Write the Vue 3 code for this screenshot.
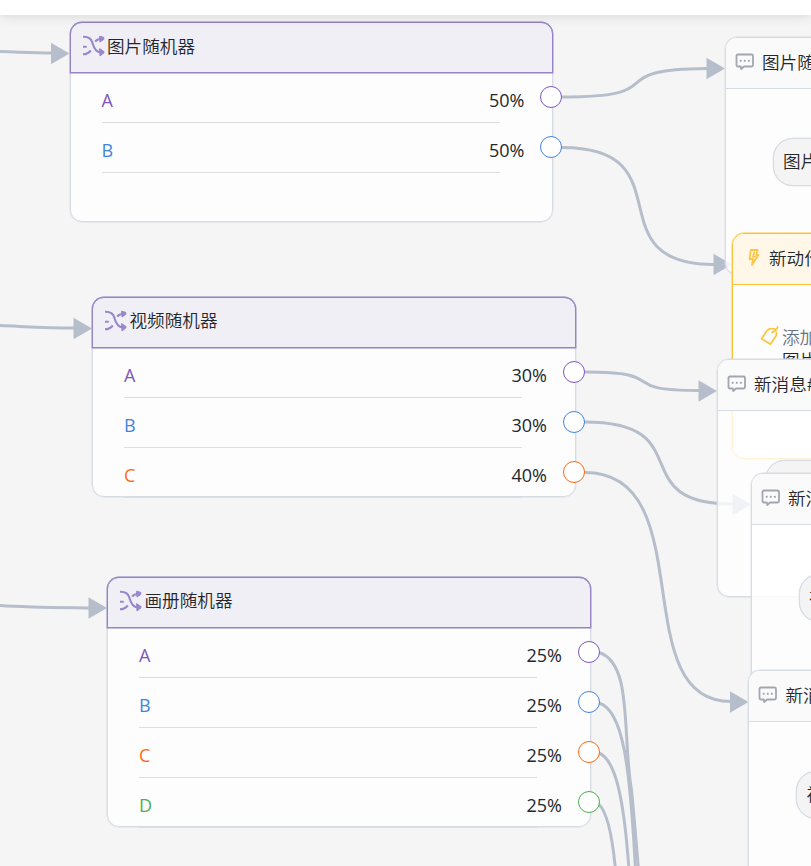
<script setup>
const palette = { A: '#7e57c2', B: '#4285e0', C: '#f96b15', D: '#4caf50' }

const randomizers = [
  { id: 'image', title: '图片随机器', x: 69.5, y: 22, height: 200, options: [['A', '50%'], ['B', '50%']] },
  { id: 'video', title: '视频随机器', x: 92, y: 296.5, height: 200, options: [['A', '30%'], ['B', '30%'], ['C', '40%']] },
  { id: 'album', title: '画册随机器', x: 107, y: 576.5, height: 250, options: [['A', '25%'], ['B', '25%'], ['C', '25%'], ['D', '25%']] },
]

const messagesBack = [{ id: 'm1', x: 725, y: 37, height: 238, title: '图片随', text: '图片' }]
const messagesFront = [
  { id: 'm2', x: 717, y: 359, height: 238, title: '新消息#', text: '' },
  { id: 'm3', x: 751, y: 473, height: 238, title: '新消', text: '视' },
  { id: 'm4', x: 748.4, y: 670.4, height: 238, title: '新消', text: '视' },
]

const edges = [
  'M0 51.5 C20 52 30 53 52 53',
  'M562 97 C678 97 596 69.5 707 68.5',
  'M562 147.5 C688 147.5 592 264 714 264.5',
  'M0 325.5 C25 326.5 45 328 75 328',
  'M585 372 C674 372 612 390.5 699 390.5',
  'M585 422 C701 422 622 504 733 504',
  'M585 472.5 C703 472.5 624 701.5 731 701.5',
  'M0 605.5 C30 607.5 55 607.5 90 608',
  'M599 652.5 C633 663 622 735 631.5 790 C634 815 636 840 638.5 870',
  'M599 703 C623 710 630 765 635.5 870',
  'M599 753 C616 760 624 800 629 870',
  'M599 804.5 C608 813 613 843 615.5 870',
]

const arrows = [[69.5, 53.5], [725, 68.5], [732, 264.5], [92, 328.5], [717, 391], [751, 504.5], [748.5, 702], [107, 608]]

const place = (n) => ({ left: n.x + 'px', top: n.y + 'px', height: n.height + 'px' })
</script>

<template>
  <main class="canvas">
    <svg class="edges" width="811" height="866" viewBox="0 0 811 866">
      <path v-for="d in edges" :key="d" :d="d" />
      <polygon v-for="[x, y] in arrows" :key="x + '-' + y" :points="`${x},${y} ${x - 18.5},${y - 10.7} ${x - 18.5},${y + 10.7}`" />
    </svg>

    <section v-for="n in randomizers" :key="n.id" class="node randomizer" :style="place(n)">
      <header class="head">
        <svg class="shuffle" width="24" height="24" viewBox="0 0 24 24">
          <path d="M1 2.8C6 2.6 9 4.2 10.3 8.4C11.6 13.5 13.5 18.3 19 18.3M1 12.7H4.8M1 20.3C4.8 20.2 7 18.8 8.8 16.5M13.2 7.6C14.4 5.8 16 5 19 5" />
          <path class="tip" d="M17.6 2.2L21.8 3.4V5.4L18 8ZM17.6 14.6L22 17.6V18.8L18 22Z" />
        </svg>
        <span>{{ n.title }}</span>
      </header>
      <ul class="options">
        <li v-for="[label, value] in n.options" :key="label">
          <span class="label" :style="{ color: palette[label] }">{{ label }}</span>
          <span class="value">{{ value }}</span>
          <i class="port" :style="{ borderColor: palette[label] }"></i>
        </li>
      </ul>
    </section>

    <template v-for="(group, g) in [messagesBack, messagesFront]" :key="g">
      <section v-if="g === 1" class="node action">
        <header class="head">
          <svg class="bolt" width="16" height="20" viewBox="0 0 16 20">
            <path d="M4.8 2H11.6L10.2 7H12.4L6 17L7 11H3.6Z" />
            <path d="M8.2 4.2L7 8.6H9" />
          </svg>
          <span>新动作</span>
        </header>
        <div class="task">
          <svg width="20" height="22" viewBox="0 0 20 22">
            <path d="M15.2 4.2C12 3.2 9 3.4 6.8 5.8L1.6 13.8L10.4 19.2L16.4 10.2V7.6M17.6 1.8C17.4 3.8 15 6 12 7.4" />
          </svg>
          <p><span>添加</span><b>图片</b></p>
        </div>
      </section>
      <section v-for="n in group" :key="n.id" class="node message" :style="place(n)">
        <header class="head">
          <svg width="20" height="18" viewBox="0 0 20 18">
            <path d="M3 1.5H16.5Q18 1.5 18 3V12Q18 13.5 16.5 13.5H9L6.2 16L5.8 13.5H3Q1.5 13.5 1.5 12V3Q1.5 1.5 3 1.5Z" />
            <path class="dots" d="M5.7 7.8h.01M9.8 7.8h.01M13.9 7.8h.01" />
          </svg>
          <span>{{ n.title }}</span>
        </header>
        <div class="bubble">{{ n.text }}</div>
      </section>
    </template>

    <div class="topbar"></div>
  </main>
</template>

<style>
body {
  margin: 0;
  overflow: hidden;
}
</style>

<style scoped>
.canvas {
  position: relative;
  width: 811px;
  height: 866px;
  overflow: hidden;
  background: #f5f5f5;
  color: #24272b;
  font: 17.6px/24px "Open Sans", "Noto Sans CJK SC", sans-serif;
}

.topbar {
  position: absolute;
  inset: 0 0 auto;
  height: 15px;
  background: #fff;
  box-shadow: 0 1px 12px rgba(0, 0, 0, 0.13);
}

.edges {
  position: absolute;
  inset: 0;
}

.edges path {
  fill: none;
  stroke: #b7becb;
  stroke-width: 3;
}

.edges polygon {
  fill: #b7becb;
}

.node {
  position: absolute;
  box-sizing: border-box;
  border: 1px solid #d7dce4;
  border-radius: 12px;
  background: rgba(255, 255, 255, 0.8);
  box-shadow: 0 0 0 0.4px #d7dce4;
}

.head {
  display: flex;
  align-items: center;
  box-sizing: border-box;
  height: 51px;
  white-space: nowrap;
  font-family: "Noto Sans CJK SC", sans-serif;
  font-weight: 350;
}

svg path {
  fill: none;
  stroke-width: 1.8;
  stroke-linecap: round;
  stroke-linejoin: round;
}

.randomizer {
  width: 483.5px;
}

.randomizer .head {
  margin: -1px;
  padding: 0 0 4px 11px;
  border: 1px solid #9583c6;
  border-radius: 12px 12px 0 0;
  background: #f0eff6;
  box-shadow: 0 0 0 0.4px #9583c6;
}

.shuffle {
  margin: 1px 1.5px 0 0;
}

.shuffle path {
  stroke: #9986cb;
  stroke-width: 2.1;
  stroke-linecap: butt;
}

.shuffle .tip {
  fill: #9986cb;
  stroke-width: 1;
}

.options {
  margin: 0;
  padding: 1px 0 0 31px;
  list-style: none;
  font-size: 18px;
}

.options li {
  display: grid;
  grid-template-columns: 1fr auto 22px;
  align-items: center;
  height: 50px;
  margin-right: -10px;
  background: linear-gradient(#dddee1, #dddee1) 0 100% / 398px 1px no-repeat;
}

.value {
  margin-top: 4px;
  margin-right: 15.5px;
}

.label {
  margin-top: 4px;
}

.port {
  box-sizing: border-box;
  width: 22px;
  height: 22px;
  margin-top: -2px;
  border: 1px solid;
  border-radius: 50%;
  outline: 0;
  background: #fff;
}

.message {
  width: 300px;
}

.message .head {
  padding-left: 9px;
  padding-bottom: 3px;
  border-bottom: 1px solid #d7dce4;
  border-radius: 11px 11px 0 0;
  background: #fafafa;
}

.message .head svg {
  margin-top: 1px;
  margin-right: 7px;
}

.message .head path {
  stroke: #a1a6b2;
}

.message .head .dots {
  stroke-width: 2.2;
}

.bubble {
  box-sizing: border-box;
  width: 180px;
  height: 48px;
  margin: 49px 0 0 47px;
  padding: 10px 9px;
  border: 1px solid #d7dce4;
  border-radius: 20px;
  background: #f4f4f4;
  box-shadow: 0 0 0 0.3px #d7dce4;
  font-family: "Noto Sans CJK SC", sans-serif;
  font-weight: 350;
}

.action {
  left: 732px;
  top: 233px;
  width: 300px;
  height: 226px;
  border-color: #fbc23a;
  box-shadow: 0 0 0 0.4px #fbc23a;
}

.action .head {
  padding-left: 13px;
  padding-bottom: 3px;
  border-bottom: 1px solid #fbc23a;
  border-radius: 11px 11px 0 0;
  background: #fff7e8;
}

.bolt {
  margin-right: 7px;
}

.action path {
  stroke: #fcc546;
}

.task {
  display: flex;
  gap: 2px;
  padding: 40px 0 0 27px;
}

.task p {
  display: flex;
  flex-direction: column;
  margin: 0;
  font-family: "Noto Sans CJK SC", sans-serif;
  font-weight: 350;
  line-height: 23px;
  color: #687282;
}

.task b {
  font-weight: 350;
  color: #24272b;
}
</style>
